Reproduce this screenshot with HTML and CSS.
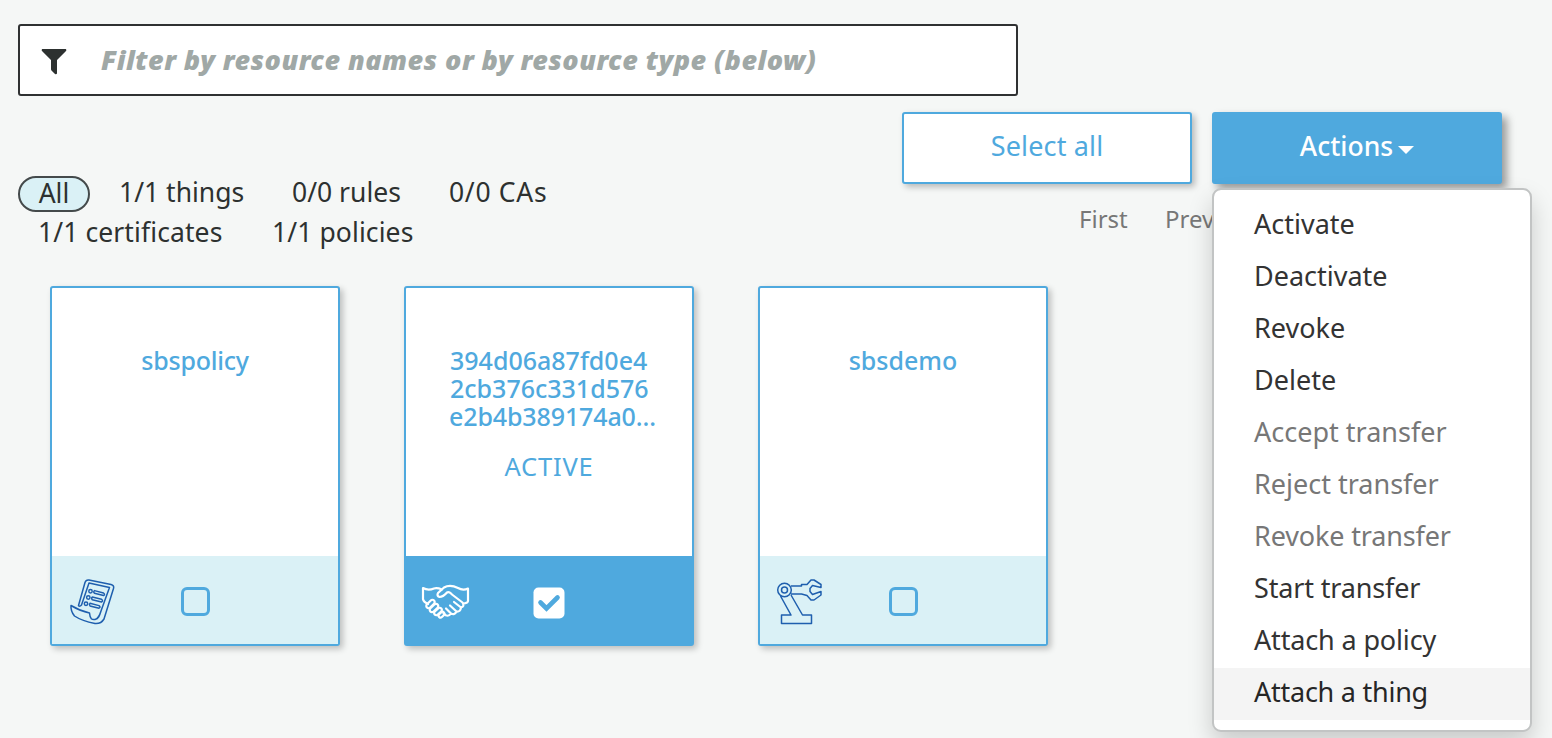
FILE: index.html
```html
<!DOCTYPE html>
<html lang="en">
<head>
<meta charset="utf-8">
<title>Resources</title>
<link rel="stylesheet" href="styles.css">
</head>
<body>
<main class="page">
  <div class="search">
    <svg class="funnel" viewBox="0 0 26 26"><path d="M1.200 0H24.800Q26 1 25 2L16 11V24.500Q15.400 25.800 14 25L10.500 21.500Q10 21 10 20V11L1 2Q0 1 1.200 0Z" fill="#2d3130"/></svg>
    <span class="placeholder">Filter by resource names or by resource type (below)</span>
  </div>
  <section class="toolbar">
    <ul class="filters">
      <li class="filter all"><span>All</span></li>
      <li class="filter things">1/1 things</li>
      <li class="filter rules">0/0 rules</li>
      <li class="filter cas">0/0 CAs</li>
      <li class="filter certs">1/1 certificates</li>
      <li class="filter policies">1/1 policies</li>
    </ul>
    <div class="controls">
      <div class="buttons">
        <button class="btn"><span>Select all</span></button>
        <div class="dropdown">
          <button class="btn primary"><span>Actions</span><i class="caret"></i></button>
          <ul class="menu">
            <li>Activate</li>
            <li>Deactivate</li>
            <li>Revoke</li>
            <li>Delete</li>
            <li class="disabled">Accept transfer</li>
            <li class="disabled">Reject transfer</li>
            <li class="disabled tight">Revoke transfer</li>
            <li class="tight">Start transfer</li>
            <li class="tight">Attach a policy</li>
            <li class="tighter hover">Attach a thing</li>
          </ul>
        </div>
      </div>
      <div class="pager"><span class="first">First</span><span class="prev">Prev</span></div>
    </div>
  </section>
  <section class="cards">
    <article class="card">
      <div class="body"><span class="name policy">sbspolicy</span></div>
      <footer class="foot">
        <svg class="icon" viewBox="0 0 64 64" fill="none" stroke="#1f5fae" stroke-width="1.500" stroke-linejoin="round" stroke-linecap="round">
          <path d="M18.500 35.500L25 12.500Q26 9.500 29 10L51 14.500Q54.500 15.500 53.500 18.500L44 49Q41 54 35 53.500Q22 51 14.500 46Q10.500 41 11 35.500Q20 41 29.500 43C30 49 32 50 35 49.500C38.500 48.500 39.500 46 41 41L49.500 17.500L29 13L21.500 35Q19.500 37 18.500 35.500Z"/>
          <circle cx="30.500" cy="21.300" r="1.700"/><circle cx="28.300" cy="27.500" r="1.700"/><circle cx="26" cy="33.800" r="1.700"/>
          <path d="M34.500 20.600L43.500 23Q45.500 24.500 43.500 25.500L34.500 23.300Q33 21.800 34.500 20.600ZM32.300 27L41.500 29.300Q43.500 31 41.500 32L32.300 29.700Q31 28.200 32.300 27ZM30 33.200L39 35.600Q41 37.200 39 38.200L30 35.900Q28.800 34.400 30 33.200Z"/>
        </svg>
        <span class="box"></span>
      </footer>
    </article>
    <article class="card selected">
      <div class="body">
        <p class="name hash">394d06a87fd0e4<br>2cb376c331d576<br><span class="last">e2b4b389174a0...</span></p>
        <span class="status">ACTIVE</span>
      </div>
      <footer class="foot">
        <svg class="icon" viewBox="0 0 64 64" fill="none" stroke="#fff" stroke-width="2.200" stroke-linejoin="round" stroke-linecap="round">
          <path d="M16 34Q11.500 32 11 29V18Q16 21 22 18.500Q25 17.500 30 19.500M51 33.500Q56 33 56 31V18.500Q51 21 46 18Q38 14 32 17.500L26 23Q24.500 26 27.500 27Q31 27 35 22.500C37 21 38 22.500 40 24.500L50.500 32.500Q53 36.500 49 37.500L42 32"/>
          <path d="M49 37.500Q48.500 42 44.500 41.500L38 35.500M44.500 41.500Q42.500 45.500 39 43.500L34 38.500M39 43.500Q36 48 31.500 43.500"/>
          <rect x="-5" y="-2.300" width="10" height="4.600" rx="2.300" transform="translate(18.500 34) rotate(-45)"/>
          <rect x="-5" y="-2.300" width="10" height="4.600" rx="2.300" transform="translate(22 38) rotate(-43)"/>
          <rect x="-4.500" y="-2.200" width="9" height="4.400" rx="2.200" transform="translate(26 41.500) rotate(-43)"/>
          <rect x="-3.300" y="-2" width="6.600" height="4" rx="2" transform="translate(29.500 44.700) rotate(-43)"/>
        </svg>
        <svg class="check" viewBox="0 0 32 32"><rect x=".5" y=".5" width="31" height="31" rx="5" fill="#fff"/><path d="M7.500 15.500L13.500 21.500L24.500 10.500" fill="none" stroke="#4fa9de" stroke-width="4.600" stroke-linecap="round"/></svg>
      </footer>
    </article>
    <article class="card">
      <div class="body"><span class="name">sbsdemo</span></div>
      <footer class="foot">
        <svg class="icon" viewBox="0 0 64 64" fill="none" stroke="#1f5fae" stroke-width="1.500" stroke-linejoin="round">
          <circle cx="16.500" cy="20" r="6.800"/><circle cx="16.500" cy="20" r="3"/>
          <path d="M12.500 26L23 45H13.500V53.500H43.500V45H34.500L23 25M23 16H33.500V14.500H39L43 10H46L53 14.500V17.500L44.500 15.500L42 18.500V21.500L44.500 24.500L53 21.500V25L46 30H43L39 25.500L33.500 24H23"/>
        </svg>
        <span class="box"></span>
      </footer>
    </article>
  </section>
</main>
</body>
</html>
```
FILE: styles.css
```css
* { box-sizing: border-box; }
body { margin: 0; background: #f5f7f6; font-family: "Noto Sans", sans-serif; color: #2d3130; font-size: 26px; }
ul { list-style: none; margin: 0; padding: 0; }
p { margin: 0; }
.page { height: 738px; overflow: hidden; padding: 24px 50px 0 18px; }
.search { width: 1000px; height: 72px; border: 2px solid #2f3132; border-radius: 3px; background: #fff; display: flex; align-items: center; padding-left: 21px; }
.funnel { width: 26px; height: 26px; margin-top: 3px; }
.placeholder { margin-left: 34px; font-style: italic; font-weight: 900; color: #a0a8a6; font-size: 27px; line-height: 36px; white-space: nowrap; letter-spacing: .45px; }
.toolbar { display: flex; justify-content: space-between; height: 190px; padding-top: 16px; }
.filters { display: flex; flex-wrap: wrap; width: 580px; padding-top: 60px; align-content: flex-start; }
.filter { height: 40px; line-height: 40px; white-space: nowrap; font-size: 26.500px; }
.all { width: 72px; margin-right: 29px; display: flex; align-items: center; justify-content: center; height: 36px; line-height: 30px; padding-bottom: 2px; margin-top: 4px; border: 2px solid #444a4b; border-radius: 18px; background: #daf1f6; }
.things { width: 173px; }
.rules { width: 157px; }
.cas { width: 130px; letter-spacing: .7px; }
.certs { width: 254px; padding-left: 20px; letter-spacing: .1px; }
.policies { letter-spacing: .1px; }
.controls { width: 600px; }
.buttons { display: flex; gap: 20px; }
.btn { width: 290px; height: 72px; border: 2px solid #4fa9de; border-radius: 3px; background: #fff; color: #4fa9de; font: 27px "Noto Sans", sans-serif; letter-spacing: .15px; box-shadow: 3px 3px 6px rgba(0,0,0,.25); display: flex; align-items: center; justify-content: center; padding: 0 0 5px; }
.btn.primary { background: #4fa9de; color: #fff; font-size: 26.500px; font-weight: 500; letter-spacing: 0; box-shadow: 5px 5px 8px rgba(0,0,0,.38); }
.caret { border: 8px solid transparent; border-top-color: #fff; border-bottom: 0; margin: 8px 0 0 5px; }
.dropdown { position: relative; }
.menu { position: absolute; top: 76px; left: 0; width: 320px; height: 544px; background: #fff; border: 2px solid #c2c4c4; border-radius: 9px; padding: 10px 0; box-shadow: 0 12px 24px rgba(0,0,0,.18); background-clip: padding-box; z-index: 2; }
.menu li { height: 52px; line-height: 48px; padding-left: 40px; font-size: 27px; white-space: nowrap; color: #333; }
.menu .tight { letter-spacing: -.15px; }
.menu .tighter { letter-spacing: -.25px; }
.menu li.disabled { color: #777; }
.menu li.hover { background: #f4f4f4; color: #262626; }
.pager { display: flex; padding: 17px 0 0 177px; font-size: 24px; line-height: 36px; color: #777; }
.first { width: 86px; }
.cards { display: flex; gap: 64px; padding-left: 32px; }
.card { width: 290px; height: 360px; border: 2px solid #4fa9de; border-radius: 3px; background: #fff; color: #4fa9de; font-size: 25px; font-weight: 500; box-shadow: 3px 3px 6px rgba(0,0,0,.23); display: flex; flex-direction: column; }
.body { height: 268px; padding-top: 58px; display: flex; flex-direction: column; align-items: center; line-height: 28px; }
.policy { letter-spacing: -.25px; }
.hash { align-self: flex-start; margin-left: 44px; white-space: nowrap; }
.last { letter-spacing: -.12px; margin-left: -1px; }
.status { margin-top: 22px; font-weight: 400; font-size: 25.500px; letter-spacing: .8px; }
.foot { height: 88px; background: #daf1f6; display: flex; align-items: center; padding-left: 8px; }
.selected .foot { background: #4fa9de; padding-left: 6px; }
.icon { width: 64px; height: 64px; margin-top: 4px; }
.box { width: 29px; height: 29px; border: 3px solid #4fa9de; border-radius: 6px; margin: 3px 0 0 57px; }
.check { width: 32px; height: 32px; margin: 6px 0 0 57px; }
```
